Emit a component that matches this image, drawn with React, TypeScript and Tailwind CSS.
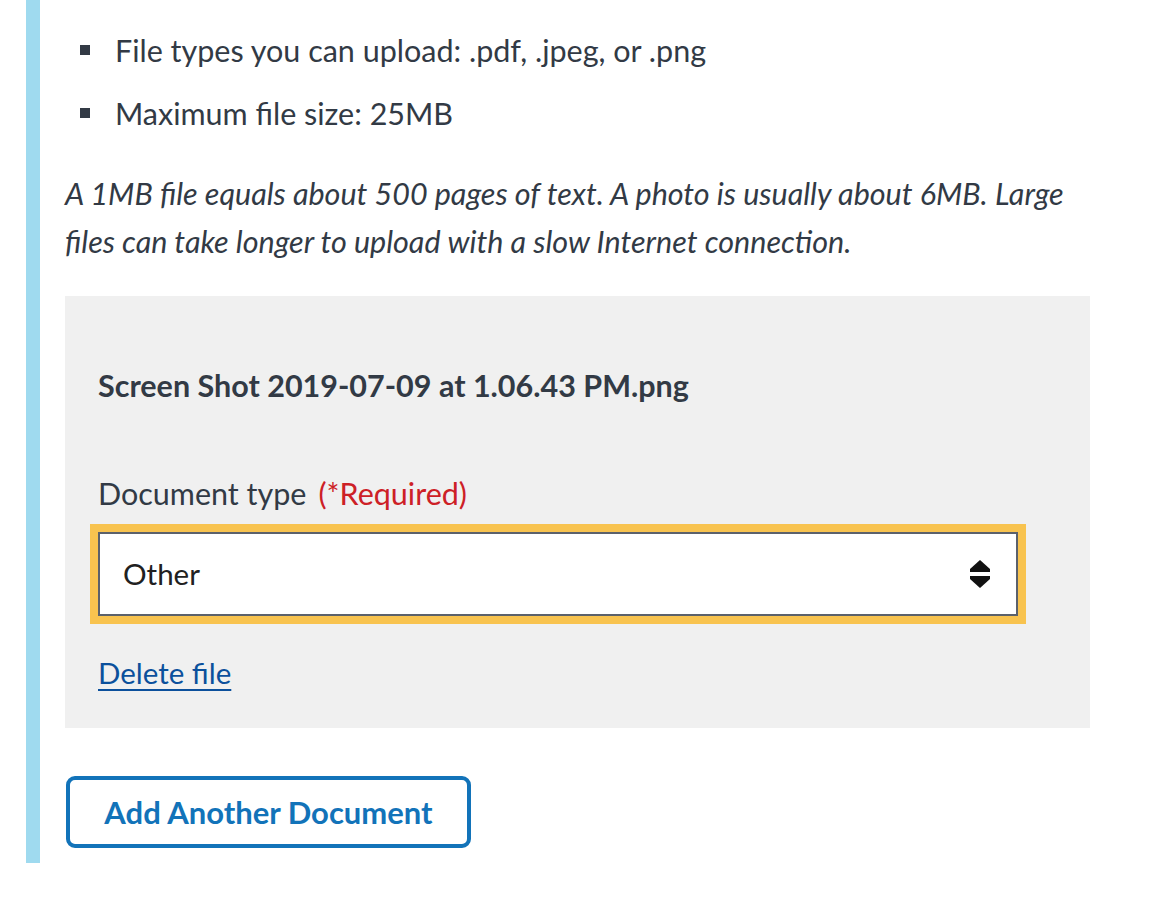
const App = () => {
  return (
    <div className="min-h-screen bg-white pt-0" style={{ fontFamily: "Lato, 'Open Sans', sans-serif" }}>
      <div className="ml-[26px] border-l-[14px] border-[#9fdaef] pl-[25px] pb-[15px] text-[#323a45]">
        {/* File rules */}
        <ul className="pt-[26px] flex flex-col gap-[15px]">
          <li className="flex items-center text-[30.5px] leading-[48px]">
            <span className="ml-[15px] mr-[25px] w-[10px] h-[10px] bg-[#323a45]"></span>
            File types you can upload: .pdf, .jpeg, or .png
          </li>
          <li className="flex items-center text-[30.5px] leading-[48px]">
            <span className="ml-[15px] mr-[25px] w-[10px] h-[10px] bg-[#323a45]"></span>
            Maximum file size: 25MB
          </li>
        </ul>
        <p className="mt-[32px] w-[1040px] text-[30.5px] leading-[48px] italic">
          A 1MB file equals about 500 pages of text. A photo is usually about
          6MB. Large
          <br />
          files can take longer to upload with a slow Internet connection.
        </p>

        {/* Uploaded file card */}
        <div className="mt-[31px] w-[1025px] bg-[#f0f0f0] pl-[33px] pt-[65px] pb-[31px]">
          <p className="text-[30.5px] leading-[48px] font-bold">
            Screen Shot 2019-07-09 at 1.06.43 PM.png
          </p>
          <label className="mt-[60px] block text-[30.5px] leading-[48px]">
            Document type
            <span className="ml-[12px] text-[#cd2026]">(*Required)</span>
          </label>
          <div className="mt-[15px] w-[920px] h-[84px] bg-white border-2 border-[#5b616b] outline-[8px] outline-solid outline-[#f8c34f] flex items-center justify-between pl-[23px] pr-[26px]">
            <span className="text-[29.5px] text-[#212121]">Other</span>
            <svg width="20" height="28" viewBox="0 0 20 28">
              <path d="M10 0 L20 9 L20 12 L0 12 L0 9 Z" fill="#111" />
              <path d="M0 16 L20 16 L20 19 L10 28 L0 19 Z" fill="#111" />
            </svg>
          </div>
          <a
            href="#"
            className="mt-[33px] inline-block text-[29.5px] leading-[48px] text-[#0b509c] underline underline-offset-[5px] decoration-2"
          >
            Delete file
          </a>
        </div>

        <button className="mt-[48px] ml-px w-[405px] h-[72px] rounded-[9px] border-4 border-[#1273b9] bg-white text-[31px] font-bold text-[#1273b9]">
          Add Another Document
        </button>
      </div>
    </div>
  );
};

export default App;
